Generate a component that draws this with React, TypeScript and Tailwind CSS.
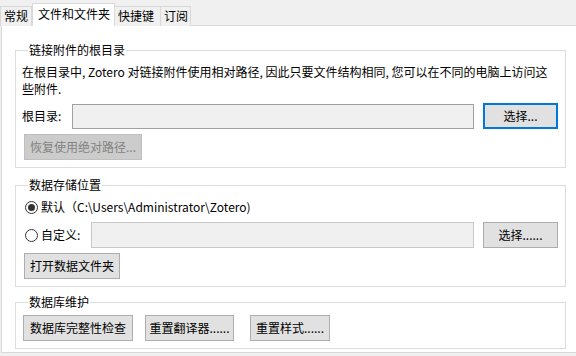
import React from "react";

const font = { fontFamily: '"Noto Sans CJK SC", "Noto Sans", sans-serif' };

function Btn({ children, w, focused, disabled }: { children: React.ReactNode; w: string; focused?: boolean; disabled?: boolean }) {
  const base = "flex h-[26px] shrink-0 items-center justify-center whitespace-nowrap text-[12px] leading-none";
  let cls = "border border-[#adadad] bg-[#e1e1e1] text-black";
  if (focused) cls = "border-2 border-[#0078d7] bg-[#e1e1e1] text-black";
  if (disabled) cls = "border border-[#bfbfbf] bg-[#cccccc] text-[#838383]";
  return <div className={`${base} ${cls} ${w}`}>{children}</div>;
}

function Radio({ checked }: { checked?: boolean }) {
  return (
    <div className="flex h-[13px] w-[13px] shrink-0 items-center justify-center rounded-full border border-[#333333] bg-white">
      {checked && <div className="h-[7px] w-[7px] rounded-full bg-[#333333]" />}
    </div>
  );
}

function Group({ title, children, className }: { title: string; children: React.ReactNode; className?: string }) {
  return (
    <fieldset className={`ml-[13px] w-[551px] border border-[#dcdcdc] pl-[6px] pr-[7px] pb-[7px] ${className ?? ""}`}>
      <legend className="ml-[6px] px-[1px] text-[12px] leading-[16px] text-black">{title}</legend>
      {children}
    </fieldset>
  );
}

export default function App() {
  return (
    <div className="h-[356px] w-[576px] overflow-hidden bg-[#f0f0f0] text-black" style={font}>
      <div className="flex h-[26px] items-end">
        <div className="h-[20px] w-[32px] border border-b-0 border-[#d9d9d9] bg-[#f0f0f0] pl-[3px] text-[12px] leading-[18px]">常规</div>
        <div className="relative z-10 h-[23px] w-[83px] border border-b-0 border-[#d9d9d9] bg-white pl-[5px] text-[12px] leading-[20px]">文件和文件夹</div>
        <div className="h-[20px] w-[46px] border border-b-0 border-l-0 border-[#d9d9d9] bg-[#f0f0f0] pl-[3px] text-[12px] leading-[18px]">快捷键</div>
        <div className="h-[20px] w-[30px] border border-b-0 border-l-0 border-[#d9d9d9] bg-[#f0f0f0] pl-[3px] text-[12px] leading-[18px]">订阅</div>
      </div>
      <div className="-mt-px ml-[1px] flex h-[328px] w-[600px] flex-col border border-[#d9d9d9] bg-white">
        <Group title="链接附件的根目录" className="mt-[16px]">
          <div className="mt-[5px] whitespace-nowrap text-[12px] leading-[17px]">
            在根目录中, Zotero 对链接附件使用相对路径, 因此只要文件结构相同, 您可以在不同的电脑上访问这
            <br />
            些附件.
          </div>
          <div className="mt-[6px] flex h-[26px] items-center">
            <span className="w-[50px] text-[12px]">根目录:</span>
            <div className="h-[25px] w-[402px] border border-[#a0a0a0] bg-[#f0f0f0]" />
            <div className="ml-auto">
              <Btn w="w-[75px]" focused>选择...</Btn>
            </div>
          </div>
          <div className="mt-[5px] pl-[2px]">
            <Btn w="w-[118px]" disabled>恢复使用绝对路径...</Btn>
          </div>
        </Group>
        <Group title="数据存储位置" className="mt-[9px]">
          <div className="mt-[5px] flex h-[18px] items-center pl-[3px] text-[12px]">
            <Radio checked />
            <span className="ml-[3px]">默认（C:\Users\Administrator\Zotero)</span>
          </div>
          <div className="mt-[6px] flex h-[26px] items-center pl-[3px] text-[12px]">
            <Radio />
            <span className="ml-[3px] w-[50px]">自定义:</span>
            <div className="h-[26px] w-[383px] border border-[#c8c8c8] bg-[#f0f0f0]" />
            <div className="ml-auto">
              <Btn w="w-[75px]">选择......</Btn>
            </div>
          </div>
          <div className="mt-[5px] pl-[2px]">
            <Btn w="w-[96px]">打开数据文件夹</Btn>
          </div>
        </Group>
        <Group title="数据库维护" className="mt-[7px]">
          <div className="mt-[5px] flex items-center pl-[1px]">
            <Btn w="w-[110px]">数据库完整性检查</Btn>
            <div className="ml-[12px]">
              <Btn w="w-[89px]">重置翻译器......</Btn>
            </div>
            <div className="ml-[16px]">
              <Btn w="w-[80px]">重置样式......</Btn>
            </div>
          </div>
        </Group>
      </div>
    </div>
  );
}
